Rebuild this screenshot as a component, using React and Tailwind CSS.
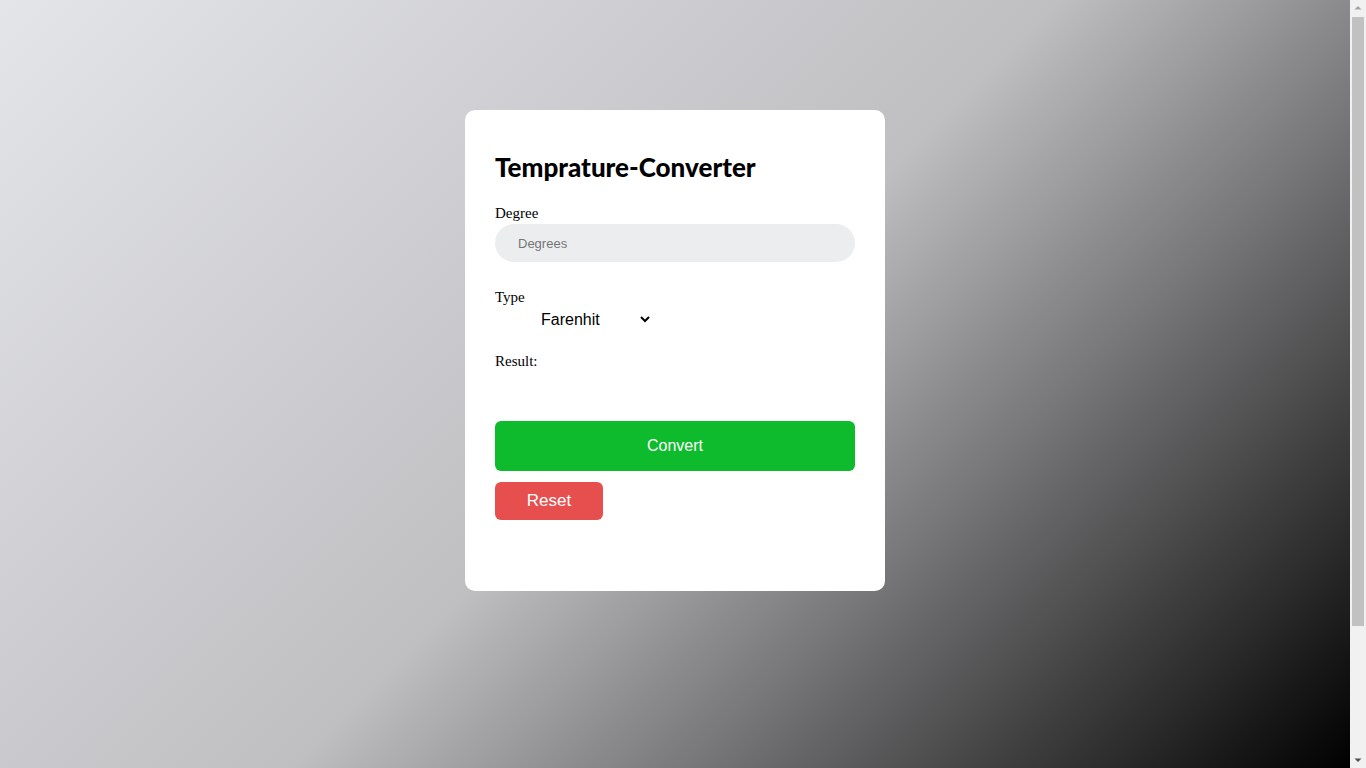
import React, { useState } from 'react';

const App = () => {
  const [degree, setDegree] = useState('');
  const [type, setType] = useState('F');
  const [result, setResult] = useState('');

  const convert = () => {
    const d = parseFloat(degree);
    if (isNaN(d)) return setResult('');
    if (type === 'F') setResult(((d - 32) * 5 / 9).toFixed(2) + ' °C');
    else setResult((d * 9 / 5 + 32).toFixed(2) + ' °F');
  };

  const reset = () => {
    setDegree('');
    setResult('');
  };

  return (
    <div className="flex h-screen overflow-hidden">
      <div className="flex-1 overflow-y-auto bg-[linear-gradient(135deg,#e4e5e9_0%,#bfbfc2_50%,#000_100%)]">
        <div className="pt-[110px] pb-[329px]">
          <div className="mx-auto w-[420px] rounded-[10px] bg-white px-[30px] pt-[41px] pb-[71px] font-['Liberation_Serif',serif] text-black">
            <h1 className="font-['Lato',sans-serif] text-[26px] font-black leading-[32px]">
              Temprature-Converter
            </h1>

            <label className="mt-[21px] block text-[15px] leading-[18px]">Degree</label>
            <input
              value={degree}
              onChange={(e) => setDegree(e.target.value)}
              placeholder="Degrees"
              className="mt-[2px] block h-[38px] w-full rounded-full bg-[#ecedef] px-[23px] font-['Liberation_Sans',sans-serif] text-[13px] text-gray-700 outline-none placeholder:text-[#757575]"
            />

            <label className="mt-[26px] block text-[15px] leading-[18px]">Type</label>
            <select
              value={type}
              onChange={(e) => setType(e.target.value)}
              className="ml-[42px] mt-[4px] block w-[116px] border-0 bg-transparent font-['Liberation_Sans',sans-serif] text-[16px] leading-[20px] outline-none"
            >
              <option value="F">Farenhit</option>
              <option value="C">Celsius</option>
            </select>

            <p className="mt-[23px] text-[15px] leading-[18px]">Result: {result}</p>

            <button
              onClick={convert}
              className="mt-[51px] block h-[50px] w-full rounded-[6px] bg-[#0ebb2c] font-['Liberation_Sans',sans-serif] text-[16px] font-light text-white"
            >
              Convert
            </button>
            <button
              onClick={reset}
              className="mt-[11px] block h-[38px] w-[108px] rounded-[6px] bg-[#e74f4f] font-['Liberation_Sans',sans-serif] text-[17px] font-light text-white"
            >
              Reset
            </button>
          </div>
        </div>
      </div>

      {/* page scrollbar as it shows in the capture */}
      <div className="flex w-[16px] flex-col items-center bg-[#f1f1f1]">
        <svg width="16" height="17" viewBox="0 0 16 17">
          <path d="M4.5 9.5 L8 6 L11.5 9.5 Z" fill="#a3a3a3" />
        </svg>
        <div className="h-[609px] w-[12px] bg-[#c1c1c1]" />
        <div className="flex-1" />
        <svg width="16" height="17" viewBox="0 0 16 17">
          <path d="M4.5 7.5 L8 11 L11.5 7.5 Z" fill="#505050" />
        </svg>
      </div>
    </div>
  );
};

export default App;
